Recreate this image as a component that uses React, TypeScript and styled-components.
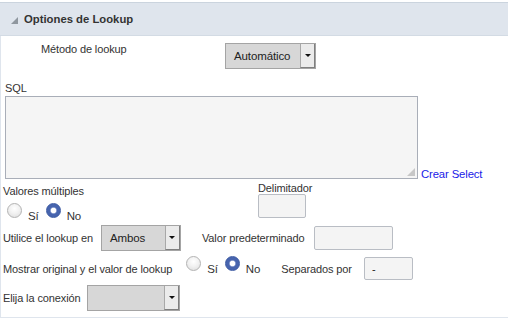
import React from 'react'
import styled, { createGlobalStyle } from 'styled-components'

const GlobalStyle = createGlobalStyle`
  html, body {
    margin: 0;
    padding: 0;
    background: #fff;
  }
  body {
    font-family: 'Liberation Sans', Arial, sans-serif;
    font-size: 11px;
    letter-spacing: -0.12px;
    color: #333;
  }
`

const Panel = styled.div`
  width: 508px;
  padding-top: 2px;
`

const Header = styled.div`
  display: flex;
  align-items: center;
  height: 32px;
  padding-left: 11px;
  background: #dfe5ed;
  border-top: 1px solid #cbd4de;
  border-bottom: 1px solid #d3dbe4;
  font-weight: bold;
  font-size: 11.3px;
  letter-spacing: 0;
  color: #333;
`

const Triangle = styled.span`
  width: 0;
  height: 0;
  margin-right: 6px;
  margin-top: 2px;
  border-left: 7px solid transparent;
  border-bottom: 7px solid #8f979f;
`

const Body = styled.div`
  border-left: 1px solid #dfe5ed;
  border-bottom: 1px solid #dfe5ed;
  padding: 0 0 6px 1px;
  display: flex;
  flex-direction: column;
`

const Label = styled.span`
  line-height: 14px;
  white-space: nowrap;
`

const MethodRow = styled.div`
  display: flex;
  align-items: flex-start;
  padding: 6px 0 0 39px;
`

const MethodLabel = styled(Label)`
  width: 184px;
`

const SqlLabel = styled(Label)`
  margin: 12px 0 0 3px;
`

const SqlRow = styled.div`
  display: flex;
  align-items: flex-end;
  margin: 1px 0 0 3px;
`

const AreaWrap = styled.div`
  position: relative;
  width: 413px;
  height: 83px;
  &::after {
    content: '';
    position: absolute;
    right: 3px;
    bottom: 3px;
    width: 8px;
    height: 8px;
    background:
      radial-gradient(circle, #9a9a9a 45%, transparent 55%) 0 0 / 2px 2px;
    clip-path: polygon(100% 0, 100% 100%, 0 100%);
  }
`

const SqlArea = styled.textarea`
  box-sizing: border-box;
  display: block;
  width: 100%;
  height: 100%;
  margin: 0;
  resize: none;
  border: 1px solid #a9aeb8;
  background: #f5f5f5;
  font-family: 'Liberation Mono', monospace;
  outline: none;
`

const CreateLink = styled.a`
  margin-left: 3px;
  color: #2020e8;
  text-decoration: none;
  font-size: 11.3px;
  line-height: 14px;
  margin-bottom: -2px;
  cursor: pointer;
`

const MultiRow = styled.div`
  display: grid;
  grid-template-columns: 255px auto;
  margin: 3px 0 0 1px;
`

const MultiGroup = styled.div`
  display: flex;
  flex-direction: column;
  padding-top: 2px;
`

const DelimGroup = styled.div`
  display: flex;
  flex-direction: column;
  align-items: flex-start;
`

const DelimLabel = styled(Label)`
  line-height: 12px;
`

const Radios = styled.div<{ $indent?: number; $shift?: number }>`
  display: flex;
  align-items: flex-start;
  gap: 7px;
  margin-left: ${p => p.$indent ?? 0}px;
  margin-top: ${p => p.$shift ?? 0}px;
`

const RadioOption = styled.label`
  display: flex;
  align-items: flex-start;
  gap: 6px;
  cursor: pointer;
`

const RadioDot = styled.span<{ $checked?: boolean }>`
  box-sizing: border-box;
  width: 15px;
  height: 15px;
  border-radius: 50%;
  border: 1px solid ${p => (p.$checked ? '#3c5aa3' : '#b3b3b3')};
  background: ${p =>
    p.$checked
      ? 'radial-gradient(circle, #fff 0 2.5px, #8da0d0 3px, #4764ae 3.8px)'
      : 'radial-gradient(circle at 50% 35%, #ffffff 0, #f2f2f2 45%, #dcdcdc 100%)'};
`

const RadioText = styled.span`
  padding-top: 6px;
  line-height: 14px;
  font-size: 11.5px;
`

const Row = styled.div<{ $top: number }>`
  display: flex;
  align-items: center;
  margin: ${p => p.$top}px 0 0 1px;
`

const Gap = styled.span<{ $w: number }>`
  display: inline-block;
  width: ${p => p.$w}px;
  flex: none;
`

const TextBox = styled.input<{ $w: number; $h: number }>`
  box-sizing: border-box;
  width: ${p => p.$w}px;
  height: ${p => p.$h}px;
  margin: 0;
  padding: 0 7px;
  border: 1px solid #b9bdc4;
  border-radius: 2px;
  background: #f4f4f4;
  font-family: 'Liberation Sans', Arial, sans-serif;
  font-size: 11px;
  color: #222;
  outline: none;
  flex: none;
`

const SelectBox = styled.div<{ $w: number }>`
  box-sizing: border-box;
  display: flex;
  width: ${p => p.$w}px;
  height: 26px;
  border: 1px solid #a4a4a4;
  background: #d7d7d7;
  color: #222;
  font-size: 11.5px;
  flex: none;
`

const SelectValue = styled.span`
  flex: 1;
  display: flex;
  align-items: center;
  padding-left: 8px;
`

const SelectArrow = styled.span`
  width: 13px;
  display: flex;
  align-items: center;
  justify-content: center;
  background: #ebebeb;
  border-left: 1px solid #a8a8a8;
  border-right: 1px solid #7f7f7f;
  border-bottom: 1px solid #7f7f7f;
  &::after {
    content: '';
    width: 0;
    height: 0;
    border-left: 3px solid transparent;
    border-right: 3px solid transparent;
    border-top: 3px solid #111;
  }
`

const SelectSlot = styled.span`
  margin-top: 1px;
`

const Select = ({ value, width }: { value?: string; width: number }) => (
  <SelectBox $w={width}>
    <SelectValue>{value}</SelectValue>
    <SelectArrow />
  </SelectBox>
)

const Radio = ({ yes }: { yes: boolean }) => (
  <>
    <RadioOption>
      <RadioDot $checked={yes} />
      <RadioText>Sí</RadioText>
    </RadioOption>
    <RadioOption>
      <RadioDot $checked={!yes} />
      <RadioText>No</RadioText>
    </RadioOption>
  </>
)

export default function App() {
  return (
    <>
      <GlobalStyle />
      <Panel>
        <Header>
          <Triangle />
          Optiones de Lookup
        </Header>
        <Body>
          <MethodRow>
            <MethodLabel>Método de lookup</MethodLabel>
            <SelectSlot>
              <Select value="Automático" width={91} />
            </SelectSlot>
          </MethodRow>

          <SqlLabel>SQL</SqlLabel>
          <SqlRow>
            <AreaWrap>
              <SqlArea />
            </AreaWrap>
            <CreateLink>Crear Select</CreateLink>
          </SqlRow>

          <MultiRow>
            <MultiGroup>
              <Label>Valores múltiples</Label>
              <Radios $indent={4} $shift={5}>
                <Radio yes={false} />
              </Radios>
            </MultiGroup>
            <DelimGroup>
              <DelimLabel>Delimitador</DelimLabel>
              <TextBox $w={48} $h={24} />
            </DelimGroup>
          </MultiRow>

          <Row $top={2}>
            <Label>Utilice el lookup en</Label>
            <Gap $w={8} />
            <Select value="Ambos" width={80} />
            <Gap $w={21} />
            <Label>Valor predeterminado</Label>
            <Gap $w={9} />
            <TextBox $w={79} $h={24} />
          </Row>

          <Row $top={6}>
            <Label>Mostrar original y el valor de lookup</Label>
            <Gap $w={14} />
            <Radios $shift={-5}>
              <Radio yes={false} />
            </Radios>
            <Gap $w={21} />
            <Label>Separados por</Label>
            <Gap $w={12} />
            <TextBox $w={49} $h={23} defaultValue="-" />
          </Row>

          <Row $top={5}>
            <Label>Elija la conexión</Label>
            <Gap $w={7} />
            <Select width={93} />
          </Row>
        </Body>
      </Panel>
    </>
  )
}
